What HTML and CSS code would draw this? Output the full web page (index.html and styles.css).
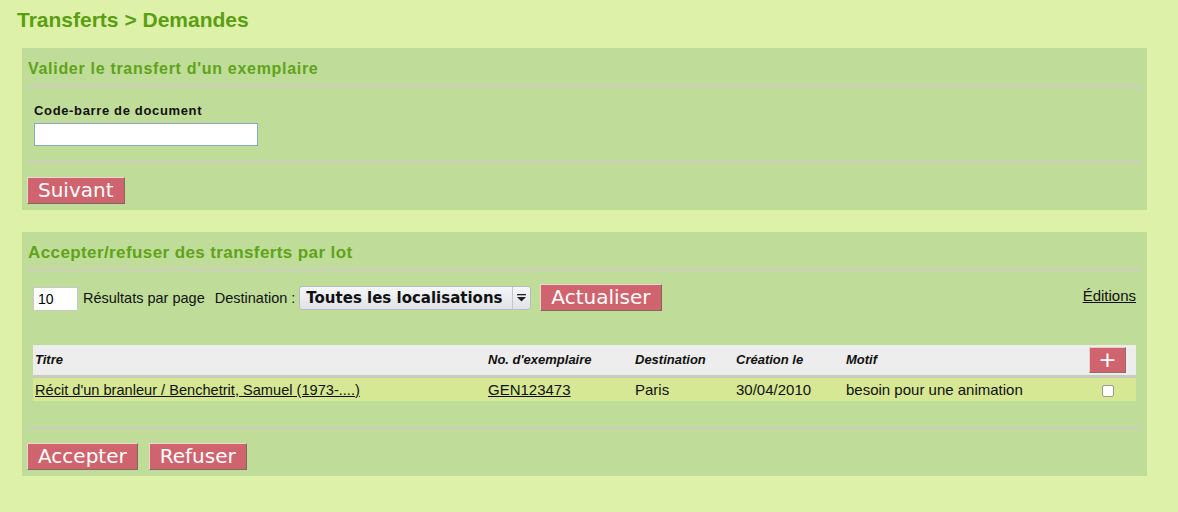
FILE: index.html
```html
<!DOCTYPE html>
<html lang="fr">
<head>
<meta charset="utf-8">
<title>Transferts &gt; Demandes</title>
<link rel="stylesheet" href="styles.css">
</head>
<body>
<h1 class="page-title">Transferts &gt; Demandes</h1>

<div class="panel panel-one">
  <h2 class="panel-head">Valider le transfert d'un exemplaire</h2>
  <div class="field">
    <label class="field-label" for="cb">Code-barre de document</label>
    <input class="text-input barcode" id="cb" type="text">
  </div>
  <div class="actions">
    <button class="btn">Suivant</button>
  </div>
</div>

<div class="panel panel-two">
  <h2 class="panel-head narrow">Accepter/refuser des transferts par lot</h2>
  <div class="toolbar">
    <div class="toolbar-left">
      <input class="text-input per-page" type="text" value="10">
      <span class="lbl">Résultats par page</span>
      <span class="lbl dest">Destination :</span>
      <div class="select">
        <span class="select-text">Toutes les localisations</span>
        <span class="select-arrow"><svg width="9" height="8" viewBox="0 0 9 8"><rect x="0" y="0" width="9" height="1.3" fill="#222"/><path d="M0 3 H9 L4.5 7.5 Z" fill="#222"/></svg></span>
      </div>
      <button class="btn btn-big">Actualiser</button>
    </div>
    <a class="editions" href="#">Éditions</a>
  </div>

  <table class="grid">
    <thead>
      <tr>
        <th class="c-title">Titre</th>
        <th class="c-num">No. d'exemplaire</th>
        <th class="c-dest">Destination</th>
        <th class="c-date">Création le</th>
        <th class="c-motif">Motif</th>
        <th class="c-check"><button class="btn-plus">+</button></th>
      </tr>
    </thead>
    <tbody>
      <tr>
        <td class="c-title"><a href="#" class="title-link">Récit d'un branleur / Benchetrit, Samuel (1973-....)</a></td>
        <td class="c-num"><a href="#">GEN123473</a></td>
        <td class="c-dest">Paris</td>
        <td class="c-date">30/04/2010</td>
        <td class="c-motif">besoin pour une animation</td>
        <td class="c-check"><span class="checkbox"></span></td>
      </tr>
    </tbody>
  </table>

  <div class="actions actions-two">
    <button class="btn">Accepter</button>
    <button class="btn">Refuser</button>
  </div>
</div>
</body>
</html>
```

FILE: styles.css
```css
* { box-sizing: border-box; }
html, body { margin: 0; padding: 0; }
body {
  background: #def1a9;
  font-family: "Liberation Sans", Arial, sans-serif;
  color: #111;
  padding: 8px 31px 0 22px;
}
.page-title {
  margin: 0 0 16px -5px;
  font-size: 21px;
  font-weight: bold;
  color: #5a9e13;
  line-height: 24px;
}
.panel {
  background: #bfdd98;
  padding: 9px 6px 6px 6px;
}
.panel-one { height: 162px; }
.panel-two { margin-top: 22px; height: 244px; }
.panel-head {
  margin: 0;
  font-size: 16px;
  font-weight: bold;
  color: #5fa31a;
  letter-spacing: 0.7px;
  line-height: 24px;
  padding-bottom: 4px;
  border-bottom: 3px solid #c9d0b5;
}
.panel-head.narrow {
  font-size: 17px;
  letter-spacing: 0.4px;
  padding-bottom: 3px;
}
.field {
  padding: 15px 0 0 6px;
  display: flex;
  flex-direction: column;
  align-items: flex-start;
  height: 75px;
  border-bottom: 3px solid #c9d0b5;
}
.field-label {
  font-size: 13px;
  font-weight: bold;
  letter-spacing: 0.65px;
  line-height: 16px;
  margin-bottom: 4px;
}
.text-input {
  background: #fff;
  border: 1px solid #8aa7c8;
  font-family: "Liberation Sans", Arial, sans-serif;
  font-size: 14px;
  padding: 2px 4px;
  outline: none;
}
.barcode { width: 224px; height: 23px; }
.actions {
  padding-top: 14px;
  display: flex;
  gap: 11px;
  margin-left: -1px;
}
.btn {
  background: #d0646e;
  color: #fff;
  font-family: "DejaVu Sans", sans-serif;
  font-size: 20px;
  line-height: 23px;
  padding: 1px 10px 1px 10px;
  border: 1px solid;
  border-color: #e9d8d0 #7f6a60 #7f6a60 #e9d8d0;
  cursor: pointer;
}
.toolbar {
  display: flex;
  justify-content: space-between;
  align-items: flex-start;
  padding: 13px 5px 0 5px;
}
.toolbar-left { display: flex; align-items: center; }
.per-page { width: 45px; height: 24px; border-color: #c9c9c9; font-size: 14px; margin-top: 2px; }
.lbl {
  font-size: 14.5px;
  margin-left: 5px;
  white-space: nowrap;
}
.lbl.dest { margin-left: 10px; }
.select {
  display: flex;
  align-items: center;
  height: 24px;
  width: 232px;
  margin-left: 4px;
  border: 1px solid #b8bcc2;
  border-radius: 3px;
  background: linear-gradient(#f6f7f9, #dfe2e7);
}
.select-text {
  flex: 1;
  font-family: "DejaVu Sans", sans-serif;
  font-weight: bold;
  font-size: 15px;
  padding-left: 6px;
  white-space: nowrap;
}
.select-arrow {
  width: 18px;
  height: 100%;
  border-left: 1px solid #c4c7cc;
  display: flex;
  align-items: center;
  justify-content: center;
}
.select + .btn { margin-left: 9px; }
.editions {
  color: #111;
  font-size: 15px;
  text-decoration: underline;
  margin-top: 3px;
}
.grid {
  margin: 34px 5px 0 5px;
  width: calc(100% - 10px);
  border-collapse: collapse;
  font-size: 15px;
}
.grid thead tr { background: #ededed; border-bottom: 3px solid #c7cbc0; }
.grid th {
  text-align: left;
  font-style: italic;
  font-weight: bold;
  font-size: 13px;
  height: 31px;
  padding: 0 2px;
}
.grid tbody tr { background: #d6e893; }
.grid td { height: 25px; padding: 0 2px; }
.grid a { color: #111; }
.title-link { font-size: 14.6px; white-space: nowrap; }
.c-title { width: 453px; }
.c-num { width: 147px; }
.c-dest { width: 101px; }
.c-date { width: 110px; }
.c-check { width: 60px; text-align: center; }
.btn-plus {
  background: #d0646e;
  color: #fff;
  border: 1px solid;
  border-color: #e5cfc9 #8a7068 #8a7068 #e5cfc9;
  width: 37px;
  height: 26px;
  font-size: 22px;
  line-height: 20px;
  font-family: "DejaVu Sans", sans-serif;
  padding: 0;
  margin-left: 11px;
  display: block;
}
.checkbox {
  display: inline-block;
  width: 12px;
  height: 12px;
  background: #fff;
  border: 1px solid #9a9a9a;
  border-radius: 2px;
  vertical-align: middle;
  margin-left: 3px;
}
.actions-two {
  margin-top: 26px;
  border-top: 3px solid #c9d0b5;
  padding-top: 13px;
}
```
